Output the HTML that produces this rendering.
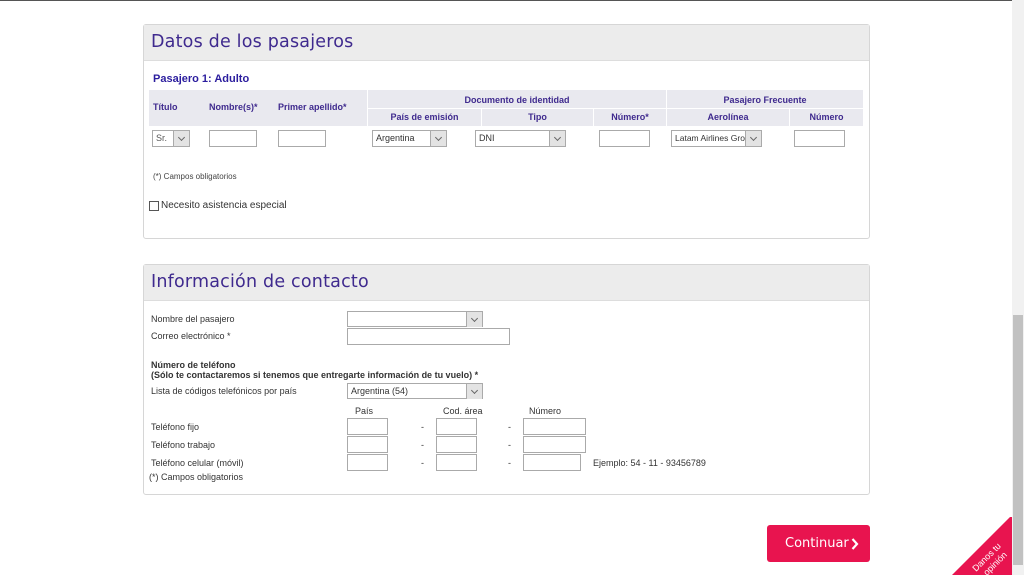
<!DOCTYPE html>
<html><head><meta charset="utf-8"><style>
*{box-sizing:border-box;margin:0;padding:0}
body{width:1024px;height:575px;overflow:hidden;background:#fff;font-family:"Liberation Sans",Arial,sans-serif;position:relative;color:#333}
.a{position:absolute}
.panel{position:absolute;left:143px;width:727px;border:1px solid #d6d6d6;border-radius:3px;background:#fff}
.ph{height:36px;background:#ececec;border-bottom:1px solid #ddd;padding-left:7px;font-family:"DejaVu Sans","Liberation Sans",sans-serif;font-size:17.5px;color:#3f2a8e;line-height:34px;letter-spacing:0.2px}
.th{font-size:9px;font-weight:bold;color:#3f2a8e;text-align:center}
.in{position:absolute;border:1px solid #aaa;background:#fff;height:17px}
.sel{position:absolute;border:1px solid #aaa;background:#fff;height:17px;font-size:9px;line-height:15px;padding-left:3px;color:#333}
.sel:after{content:"";position:absolute;right:0;top:0;width:15px;height:15px;background:#e3e3e3;border-left:1px solid #aaa}
.sel i{position:absolute;right:5px;top:4px;width:5px;height:5px;border-right:1px solid #666;border-bottom:1px solid #666;transform:rotate(45deg);z-index:2}
.lb{position:absolute;font-size:9px;color:#333}
</style></head><body>
<div class="a" style="left:0;top:0;width:1012px;height:1px;background:#555"></div>

<div class="panel" style="top:24px;height:215px">
 <div class="ph">Datos de los pasajeros</div>
</div>
<div class="a" style="left:153px;top:73px;font-size:11px;font-weight:bold;color:#2b1d9e">Pasajero 1: Adulto</div>
<div class="a" style="left:149px;top:90px;width:714px;height:36px;background:#e9e9ef"></div>
<div class="a" style="left:368px;top:108px;width:495px;height:1px;background:#fff"></div>
<div class="a" style="left:367px;top:90px;width:1px;height:36px;background:#fff"></div>
<div class="a" style="left:666px;top:90px;width:1px;height:36px;background:#fff"></div>
<div class="a" style="left:481px;top:108px;width:1px;height:18px;background:#fff"></div>
<div class="a" style="left:593px;top:108px;width:1px;height:18px;background:#fff"></div>
<div class="a" style="left:789px;top:108px;width:1px;height:18px;background:#fff"></div>
<div class="a th" style="left:153px;top:102px;text-align:left">Título</div>
<div class="a th" style="left:209px;top:102px">Nombre(s)*</div>
<div class="a th" style="left:278px;top:102px">Primer apellido*</div>
<div class="a th" style="left:368px;top:95px;width:298px">Documento de identidad</div>
<div class="a th" style="left:368px;top:112px;width:113px">País de emisión</div>
<div class="a th" style="left:482px;top:112px;width:111px">Tipo</div>
<div class="a th" style="left:594px;top:112px;width:72px">Número*</div>
<div class="a th" style="left:667px;top:95px;width:196px">Pasajero Frecuente</div>
<div class="a th" style="left:667px;top:112px;width:122px">Aerolínea</div>
<div class="a th" style="left:790px;top:112px;width:73px">Número</div>
<div class="sel" style="left:152px;top:130px;width:38px;color:#555">Sr.<i></i></div>
<div class="in" style="left:209px;top:130px;width:48px"></div>
<div class="in" style="left:278px;top:130px;width:48px"></div>
<div class="sel" style="left:372px;top:130px;width:75px">Argentina<i></i></div>
<div class="sel" style="left:475px;top:130px;width:91px">DNI<i></i></div>
<div class="in" style="left:599px;top:130px;width:51px"></div>
<div class="sel" style="left:671px;top:130px;width:91px;overflow:hidden;white-space:nowrap;font-size:8.5px">Latam Airlines Group<i></i></div>
<div class="in" style="left:794px;top:130px;width:51px"></div>
<div class="lb" style="left:153px;top:172px;font-size:8px;color:#444">(*) Campos obligatorios</div>
<div class="a" style="left:149px;top:201px;width:10px;height:10px;border:1px solid #555;background:#fff"></div>
<div class="lb" style="left:161px;top:200px;font-size:10px">Necesito asistencia especial</div>

<div class="panel" style="top:264px;height:231px">
 <div class="ph">Información de contacto</div>
</div>
<div class="lb" style="left:151px;top:314px">Nombre del pasajero</div>
<div class="sel" style="left:347px;top:311px;width:136px;height:16px"><i></i></div>
<div class="lb" style="left:151px;top:331px">Correo electrónico *</div>
<div class="in" style="left:347px;top:328px;width:163px"></div>
<div class="lb" style="left:151px;top:360px;font-weight:bold">Número de teléfono</div>
<div class="lb" style="left:151px;top:370px;font-weight:bold">(Sólo te contactaremos si tenemos que entregarte información de tu vuelo) *</div>
<div class="lb" style="left:151px;top:386px">Lista de códigos telefónicos por país</div>
<div class="sel" style="left:347px;top:383px;width:136px;height:16px">Argentina (54)<i></i></div>
<div class="lb" style="left:355px;top:406px">País</div>
<div class="lb" style="left:443px;top:406px">Cod. área</div>
<div class="lb" style="left:529px;top:406px">Número</div>
<div class="lb" style="left:151px;top:422px">Teléfono fijo</div>
<div class="lb" style="left:151px;top:440px">Teléfono trabajo</div>
<div class="lb" style="left:151px;top:458px">Teléfono celular (móvil)</div>
<div class="in" style="left:347px;top:418px;width:41px"></div><div class="lb" style="left:421px;top:422px">-</div>
<div class="in" style="left:436px;top:418px;width:41px"></div><div class="lb" style="left:508px;top:422px">-</div>
<div class="in" style="left:523px;top:418px;width:63px"></div>
<div class="in" style="left:347px;top:436px;width:41px"></div><div class="lb" style="left:421px;top:440px">-</div>
<div class="in" style="left:436px;top:436px;width:41px"></div><div class="lb" style="left:508px;top:440px">-</div>
<div class="in" style="left:523px;top:436px;width:63px"></div>
<div class="in" style="left:347px;top:454px;width:41px"></div><div class="lb" style="left:421px;top:458px">-</div>
<div class="in" style="left:436px;top:454px;width:41px"></div><div class="lb" style="left:508px;top:458px">-</div>
<div class="in" style="left:523px;top:454px;width:58px"></div>
<div class="lb" style="left:593px;top:458px">Ejemplo: 54 - 11 - 93456789</div>
<div class="lb" style="left:149px;top:472px">(*) Campos obligatorios</div>

<div class="a" style="left:767px;top:525px;width:103px;height:37px;background:#e8144f;border-radius:3px;"></div>
<div class="a" style="left:785px;top:525px;color:#fff;font-family:'DejaVu Sans',sans-serif;font-size:13px;line-height:37px">Continuar</div>
<svg class="a" style="left:851px;top:538px" width="8" height="12" viewBox="0 0 8 12"><path d="M1.5 1 L6 6 L1.5 11" stroke="#fff" stroke-width="2.2" fill="none"/></svg>

<svg class="a" style="left:952px;top:517px" width="60" height="58"><polygon points="0,58 58,0 60,0 60,58" fill="#e8144f"/>
<text x="0" y="0" transform="translate(24,55) rotate(-45)" font-family="Liberation Sans,sans-serif" font-size="9" fill="#fff">Danos tu</text>
<text x="0" y="0" transform="translate(35,59) rotate(-45)" font-family="Liberation Sans,sans-serif" font-size="9" fill="#fff">opinión</text></svg>

<div class="a" style="left:1012px;top:0;width:12px;height:575px;background:#f1f1f1"></div>
<div class="a" style="left:1013px;top:315px;width:10px;height:250px;background:#c1c1c1"></div>
</body></html>
